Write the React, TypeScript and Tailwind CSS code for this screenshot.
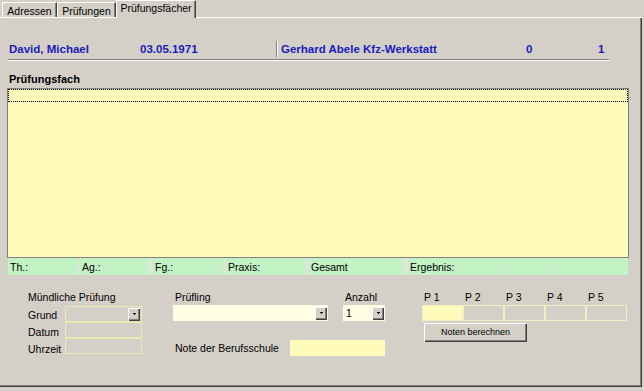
import React from "react";

function DropBtn() {
  return (
    <div className="w-[12px] h-[13px] bg-[#d4d0c8] shadow-[inset_1px_1px_#ffffff,inset_-1px_-1px_#404040,inset_-2px_-2px_#808080] flex items-center justify-center shrink-0">
      <svg width="3" height="2" viewBox="0 0 3 2">
        <rect x="0" y="0" width="3" height="1" fill="#000" />
        <rect x="1" y="1" width="1" height="1" fill="#000" />
      </svg>
    </div>
  );
}

function Tab({ label, w }: { label: string; w: string }) {
  return (
    <div className={`${w} h-[16px] flex flex-col`}>
      <div className="flex-1 border-t border-l border-white border-r border-r-[#404040] shadow-[inset_-1px_0_#808080] text-center leading-[12px] pt-[2px]">
        {label}
      </div>
      <div className="h-px bg-white" />
    </div>
  );
}

const cells: { label: string; w: string; ml: string }[] = [
  { label: "Th.:", w: "w-[70px]", ml: "ml-0" },
  { label: "Ag.:", w: "w-[69px]", ml: "ml-[2px]" },
  { label: "Fg.:", w: "w-[70px]", ml: "ml-[4px]" },
  { label: "Praxis:", w: "w-[79px]", ml: "ml-[3px]" },
  { label: "Gesamt", w: "w-[94px]", ml: "ml-[4px]" },
  { label: "Ergebnis:", w: "w-[100px]", ml: "ml-[5px]" },
  { label: "", w: "w-[40px]", ml: "ml-[1px]" },
  { label: "", w: "w-[78px]", ml: "ml-[1px]" },
];

export default function App() {
  return (
    <div className="w-[644px] h-[391px] bg-[#d4d0c8] flex flex-col overflow-hidden text-black text-[10.5px] font-['Liberation_Sans',Arial,sans-serif]">
      {/* Tabs */}
      <div className="flex items-end h-[18px] shrink-0 w-[642px]">
        <div className="w-[2px] h-px bg-white" />
        <Tab label="Adressen" w="w-[55px]" />
        <Tab label="Prüfungen" w="w-[59px]" />
        <div className="w-[80px] h-[18px] border-t border-l border-white border-r border-r-[#404040] shadow-[inset_-1px_0_#808080] text-center leading-[12px] pt-[1px]">
          Prüfungsfächer
        </div>
        <div className="flex-1 h-px bg-white" />
      </div>

      {/* Panel */}
      <div className="w-[642px] h-[369px] shrink-0 flex flex-col shadow-[inset_-1px_-1px_#404040,inset_-2px_-2px_#808080]">
        {/* Header */}
        <div className="mt-[23px] h-[16px] flex items-center text-[11.5px] font-bold text-[#1a1ac0] leading-[13px]">
          <div className="w-[140px] pl-[9px]">David, Michael</div>
          <div className="w-[136px]">03.05.1971</div>
          <div className="w-[2px] h-[16px] flex">
            <div className="w-px bg-[#808080]" />
            <div className="w-px bg-white" />
          </div>
          <div className="w-[248px] pl-[3px]">Gerhard Abele Kfz-Werkstatt</div>
          <div className="w-[72px]">0</div>
          <div>1</div>
        </div>
        <div className="ml-[8px] w-[601px] mt-[2px]">
          <div className="h-px bg-[#808080]" />
          <div className="h-px bg-white" />
        </div>

        <div className="mt-[12px] pl-[9px] text-[11px] font-bold leading-[13px]">Prüfungsfach</div>

        {/* List */}
        <div className="mt-[2px] ml-[7px] w-[622px] h-[170px] border border-[#808080] bg-[#fefbbb]">
          <div className="h-[13px] border border-dotted border-black" />
        </div>

        {/* Green strip */}
        <div className="ml-[8px] w-[620px] h-[17px] flex bg-[#dde6d9]">
          {cells.map((c, i) => (
            <div key={i} className={`${c.w} ${c.ml} bg-[#c3f2c4] flex items-center pl-[2px] leading-[12px]`}>
              {c.label}
            </div>
          ))}
        </div>

        {/* Bottom section */}
        <div className="mt-[16px] flex leading-[12px]">
          {/* Col A */}
          <div className="ml-[28px] w-[114px] flex flex-col">
            <div>Mündliche Prüfung</div>
            <div className="mt-[3px] flex flex-col">
              <div className="flex h-[16px] items-center">
                <div className="w-[37px] pt-[1px]">Grund</div>
                <div className="w-[77px] h-[16px] border border-[#ece8b6] flex items-center justify-end pr-px">
                  <DropBtn />
                </div>
              </div>
              <div className="flex h-[16px] items-center">
                <div className="w-[37px] pt-[3px]">Datum</div>
                <div className="w-[77px] h-[16px] border border-[#ece8b6]" />
              </div>
              <div className="flex h-[16px] items-center">
                <div className="w-[37px] pt-[5px]">Uhrzeit</div>
                <div className="w-[77px] h-[16px] border border-[#ece8b6]" />
              </div>
            </div>
          </div>

          {/* Col B */}
          <div className="ml-[31px] flex flex-col">
            <div className="flex">
              <div className="w-[155px] flex flex-col">
                <div className="pl-[2px]">Prüfling</div>
                <div className="mt-[2px] h-[16px] bg-[#fffde4] flex items-center justify-end pr-px">
                  <DropBtn />
                </div>
              </div>
              <div className="ml-[15px] w-[42px] flex flex-col">
                <div className="pl-[2px]">Anzahl</div>
                <div className="mt-[2px] h-[16px] bg-[#fffde4] flex items-center justify-between pl-[3px] pr-px">
                  <span>1</span>
                  <DropBtn />
                </div>
              </div>
            </div>
            <div className="mt-[19px] flex items-center h-[16px]">
              <div className="w-[117px] pl-[2px]">Note der Berufsschule</div>
              <div className="w-[95px] h-[16px] bg-[#fefbbb]" />
            </div>
          </div>

          {/* Col C */}
          <div className="ml-[37px] flex flex-col">
            <div className="flex">
              {["P 1", "P 2", "P 3", "P 4", "P 5"].map((p) => (
                <div key={p} className="w-[41px] pl-[2px]">
                  {p}
                </div>
              ))}
            </div>
            <div className="mt-[2px] flex h-[16px]">
              <div className="w-[41px] h-[16px] border border-[#f3efc0] bg-[#fefbbb]" />
              <div className="w-[41px] h-[16px] border border-[#f3efc0]" />
              <div className="w-[41px] h-[16px] border border-[#f3efc0]" />
              <div className="w-[41px] h-[16px] border border-[#f3efc0]" />
              <div className="w-[41px] h-[16px] border border-[#f3efc0]" />
            </div>
            <button className="mt-[2px] ml-[2px] w-[103px] h-[19px] bg-[#d4d0c8] text-[9px] leading-[11px] shadow-[inset_1px_1px_#ffffff,inset_-1px_-1px_#404040,inset_-2px_-2px_#808080] flex items-center justify-center">
              Noten berechnen
            </button>
          </div>
        </div>
      </div>
    </div>
  );
}
